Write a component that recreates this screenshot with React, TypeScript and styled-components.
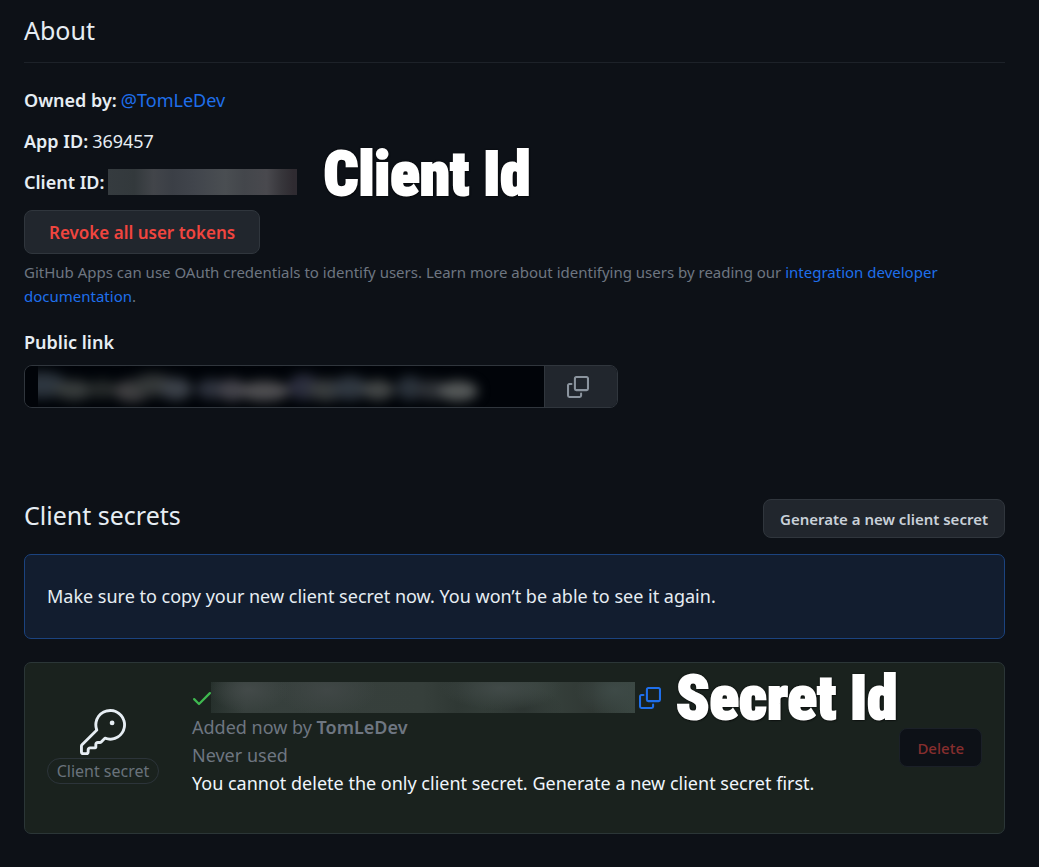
import React from "react";
import styled, { createGlobalStyle } from "styled-components";
import { GoKey } from "react-icons/go";

const color = {
  canvas: "#0d1117",
  inset: "#010409",
  text: "#e6edf3",
  muted: "#6e7681",
  border: "#30363d",
  divider: "#1d2229",
  button: "#21262d",
  link: "#1f6feb",
  danger: "#f0453f",
  success: "#3fb950",
};

const GlobalStyle = createGlobalStyle`
  *, *::before, *::after { box-sizing: border-box; }
  body {
    margin: 0;
    background: ${color.canvas};
    color: ${color.text};
    font-family: "Noto Sans", "Segoe UI", sans-serif;
    font-size: 18px;
    line-height: 28px;
  }
`;

const Page = styled.main`
  padding: 12px 34px 34px 24px;
`;

const Heading = styled.h2`
  margin: 0;
  font-size: 25px;
  line-height: 36px;
  font-weight: 400;
`;

const AboutHeader = styled.header`
  padding-bottom: 14px;
  border-bottom: 1px solid ${color.divider};
`;

const Facts = styled.dl`
  display: flex;
  flex-direction: column;
  gap: 13px;
  margin: 23px 0 14px;
`;

const Fact = styled.div`
  display: flex;
  align-items: center;
  gap: 4px;
`;

const Term = styled.dt`
  font-weight: 600;
`;

const Value = styled.dd`
  position: relative;
  margin: 0;
`;

const Link = styled.a`
  color: ${color.link};
  text-decoration: none;
`;

const ClientIdMask = styled.div`
  width: 189px;
  height: 26px;
  background: linear-gradient(
    90deg,
    #353b3f 0%,
    #33393c 14%,
    #42454a 24%,
    #3b3f46 34%,
    #41454c 46%,
    #4a4e52 62%,
    #43464b 72%,
    #49494e 84%,
    #37363b 92%,
    #2f2b31 98%
  );
`;

const Callout = styled.strong<{ $raised?: boolean }>`
  position: absolute;
  left: 100%;
  bottom: ${p => (p.$raised ? -9 : -19)}px;
  z-index: 1;
  margin-left: 26px;
  color: #fff;
  font-family: Impact, "Roboto Condensed", Roboto, sans-serif;
  font-size: 61px;
  line-height: 60px;
  font-weight: 900;
  white-space: nowrap;
  -webkit-text-stroke: 2px #fff;
  text-shadow: 0 0 2px #000, 0 0 3px #000, 1px 1px 2px #000;
`;

const Button = styled.button<{ $danger?: boolean; $large?: boolean }>`
  height: ${p => (p.$large ? 44 : 39)}px;
  padding: 0 ${p => (p.$large ? 24 : 16)}px;
  border: 1px solid ${color.border};
  border-radius: 8px;
  background: ${color.button};
  color: ${p => (p.$danger ? color.danger : "#c9d1d9")};
  font-family: inherit;
  font-size: ${p => (p.$large ? 17 : 15)}px;
  font-weight: 600;
  white-space: nowrap;

  &:disabled {
    padding: 0 17px;
    border-color: #1b2028;
    background: ${color.canvas};
    color: #862e2e;
    font-weight: 500;
  }
`;

const Note = styled.p`
  margin: 6px 0 20px;
  color: ${color.muted};
  font-size: 15px;
  line-height: 24px;
`;

const FieldLabel = styled.label`
  display: block;
  margin-bottom: 9px;
  font-weight: 600;
`;

const LinkField = styled.div`
  display: flex;
  width: 594px;
  max-width: 100%;
  height: 43px;
  border: 1px solid ${color.border};
  border-radius: 8px;
  overflow: hidden;
`;

const LinkBox = styled.div`
  position: relative;
  display: flex;
  flex: 1;
  min-width: 0;
`;

const LinkInput = styled.input`
  flex: 1;
  min-width: 0;
  padding: 0 12px;
  border: 0;
  background: ${color.inset};
  color: ${color.text};
  font: inherit;
`;

const LinkMask = styled.svg`
  position: absolute;
  inset: 0 auto 0 13px;
  pointer-events: none;
`;

const CopyAddon = styled.button`
  display: grid;
  place-items: center;
  width: 73px;
  padding: 0 6px 0 0;
  border: 0;
  border-left: 1px solid ${color.border};
  background: ${color.button};
  color: #8b949e;
`;

const SecretsHeader = styled.header`
  display: flex;
  align-items: flex-end;
  justify-content: space-between;
  margin: 91px 0 16px;

  ${Heading} {
    align-self: flex-start;
    line-height: 32px;
  }
`;

const Notice = styled.p`
  margin: 0 0 23px;
  padding: 27px 22px 28px;
  border: 1px solid #1b437f;
  border-radius: 7px;
  background: #121d2f;
`;

const SecretCard = styled.article`
  display: flex;
  align-items: center;
  padding: 19px 22px 20px;
  border: 1px solid #2b3637;
  border-radius: 7px;
  background: #1a221e;
`;

const SecretKind = styled.div`
  display: flex;
  flex-direction: column;
  align-items: center;
  width: 112px;
  margin-right: 33px;
  padding-bottom: 3px;
`;

const Pill = styled.span`
  width: 100%;
  height: 26px;
  margin-top: 3px;
  border: 1px solid #2c343a;
  border-radius: 13px;
  color: #69727b;
  font-size: 16px;
  line-height: 24px;
  text-align: center;
  white-space: nowrap;
`;

const SecretInfo = styled.div`
  flex: 1;
  min-width: 0;
  padding-bottom: 16px;
`;

const SecretRow = styled.div`
  display: flex;
  align-items: center;
  height: 31px;
`;

const CheckSlot = styled.span`
  display: flex;
  width: 19px;
  color: ${color.success};
`;

const SecretMask = styled.div`
  width: 424px;
  height: 31px;
  background:
    radial-gradient(ellipse 40px 22px at 38px 8px, #434a49, transparent),
    radial-gradient(ellipse 50px 26px at 116px 8px, #404746, transparent),
    radial-gradient(ellipse 60px 22px at 290px 6px, #414a48, transparent),
    radial-gradient(ellipse 40px 26px at 404px 8px, #3e4a47, transparent),
    radial-gradient(ellipse 40px 22px at 312px 28px, #2d3532, transparent),
    linear-gradient(90deg, #26302c 0%, #37403d 8%, #363f3b 50%, #2f3834 58%, #38433e 76%, #303834 90%, #3a4742 100%);
`;

const CopyAction = styled.span`
  position: relative;
  display: flex;
  margin-left: 4px;

  ${Callout} {
    margin-left: 15px;
  }
`;

const IconButton = styled.button`
  display: flex;
  padding: 0;
  border: 0;
  background: none;
  color: ${color.link};
`;

const Line = styled.p<{ $muted?: boolean }>`
  margin: 0;
  color: ${p => (p.$muted ? color.muted : "#f0f6fc")};

  b {
    font-weight: 600;
  }
`;

const CopyIcon = () => (
  <svg width="22" height="22" viewBox="0 0 16 16" fill="currentColor" aria-hidden="true">
    <path d="M0 6.75C0 5.784.784 5 1.75 5h1.5a.75.75 0 0 1 0 1.5h-1.5a.25.25 0 0 0-.25.25v7.5c0 .138.112.25.25.25h7.5a.25.25 0 0 0 .25-.25v-1.5a.75.75 0 0 1 1.5 0v1.5A1.75 1.75 0 0 1 9.25 16h-7.5A1.75 1.75 0 0 1 0 14.25Z" />
    <path d="M5 1.75C5 .784 5.784 0 6.75 0h7.5C15.216 0 16 .784 16 1.75v7.5A1.75 1.75 0 0 1 14.25 11h-7.5A1.75 1.75 0 0 1 5 9.25Zm1.75-.25a.25.25 0 0 0-.25.25v7.5c0 .138.112.25.25.25h7.5a.25.25 0 0 0 .25-.25v-7.5a.25.25 0 0 0-.25-.25Z" />
  </svg>
);

const CheckSvg = styled.svg`
  flex: none;
  margin-left: -2px;
`;

const CheckIcon = () => (
  <CheckSvg width="24" height="24" viewBox="0 0 16 16" fill="currentColor" aria-hidden="true">
    <path d="M13.78 4.22a.75.75 0 0 1 0 1.06l-7.25 7.25a.75.75 0 0 1-1.06 0L2.22 9.28a.751.751 0 0 1 .018-1.042.751.751 0 0 1 1.042-.018L6 10.94l6.72-6.72a.75.75 0 0 1 1.06 0Z" />
  </CheckSvg>
);

// Soft blobs that hide the public link: centre x, centre y, radius x, radius y, colour.
const blobs: [number, number, number, number, string][] = [
  [4, 19, 26, 13, "#2d363f"],
  [36, 24, 20, 10, "#373c3c"],
  [64, 23, 16, 9, "#262b2b"],
  [94, 25, 18, 11, "#404042"],
  [116, 19, 22, 11, "#343839"],
  [138, 23, 16, 11, "#3b4149"],
  [174, 23, 16, 10, "#2d323d"],
  [194, 24, 14, 11, "#43434b"],
  [226, 25, 26, 10, "#4f4f52"],
  [266, 21, 16, 13, "#2b2e3e"],
  [288, 24, 18, 11, "#383c3e"],
  [312, 22, 18, 12, "#303841"],
  [340, 24, 16, 10, "#434747"],
  [372, 22, 14, 12, "#2a323b"],
  [394, 24, 16, 10, "#2d3136"],
  [420, 25, 20, 10, "#565a5a"],
];

export default function App() {
  return (
    <>
      <GlobalStyle />
      <Page>
        <section>
          <AboutHeader>
            <Heading>About</Heading>
          </AboutHeader>
          <Facts>
            <Fact>
              <Term>Owned by:</Term>
              <Value>
                <Link href="#owner">@TomLeDev</Link>
              </Value>
            </Fact>
            <Fact>
              <Term>App ID:</Term>
              <Value>369457</Value>
            </Fact>
            <Fact>
              <Term>Client ID:</Term>
              <Value>
                <ClientIdMask />
                <Callout $raised>Client Id</Callout>
              </Value>
            </Fact>
          </Facts>
          <Button type="button" $danger $large>
            Revoke all user tokens
          </Button>
          <Note>
            GitHub Apps can use OAuth credentials to identify users. Learn more about identifying users by reading our{" "}
            <Link href="#docs">integration developer documentation</Link>.
          </Note>
          <FieldLabel htmlFor="public-link">Public link</FieldLabel>
          <LinkField>
            <LinkBox>
              <LinkInput id="public-link" type="text" readOnly />
              <LinkMask width="460" height="41" viewBox="0 0 460 41" aria-hidden="true">
                <defs>
                  <filter id="soften" filterUnits="userSpaceOnUse" x="-60" y="-30" width="560" height="100" colorInterpolationFilters="sRGB">
                    <feGaussianBlur stdDeviation="6" />
                  </filter>
                </defs>
                <g filter="url(#soften)">
                  {blobs.map(([cx, cy, rx, ry, fill]) => (
                    <ellipse key={cx} cx={cx} cy={cy} rx={rx} ry={ry} fill={fill} />
                  ))}
                </g>
              </LinkMask>
            </LinkBox>
            <CopyAddon type="button" aria-label="Copy public link">
              <CopyIcon />
            </CopyAddon>
          </LinkField>
        </section>

        <section>
          <SecretsHeader>
            <Heading>Client secrets</Heading>
            <Button type="button">Generate a new client secret</Button>
          </SecretsHeader>
          <Notice>Make sure to copy your new client secret now. You won’t be able to see it again.</Notice>
          <SecretCard>
            <SecretKind>
              <GoKey size={46} aria-hidden="true" />
              <Pill>Client secret</Pill>
            </SecretKind>
            <SecretInfo>
              <SecretRow>
                <CheckSlot>
                  <CheckIcon />
                </CheckSlot>
                <SecretMask />
                <CopyAction>
                  <IconButton type="button" aria-label="Copy client secret">
                    <CopyIcon />
                  </IconButton>
                  <Callout>Secret Id</Callout>
                </CopyAction>
              </SecretRow>
              <Line $muted>
                Added now by <b>TomLeDev</b>
              </Line>
              <Line $muted>Never used</Line>
              <Line>You cannot delete the only client secret. Generate a new client secret first.</Line>
            </SecretInfo>
            <Button type="button" $danger disabled>
              Delete
            </Button>
          </SecretCard>
        </section>
      </Page>
    </>
  );
}
